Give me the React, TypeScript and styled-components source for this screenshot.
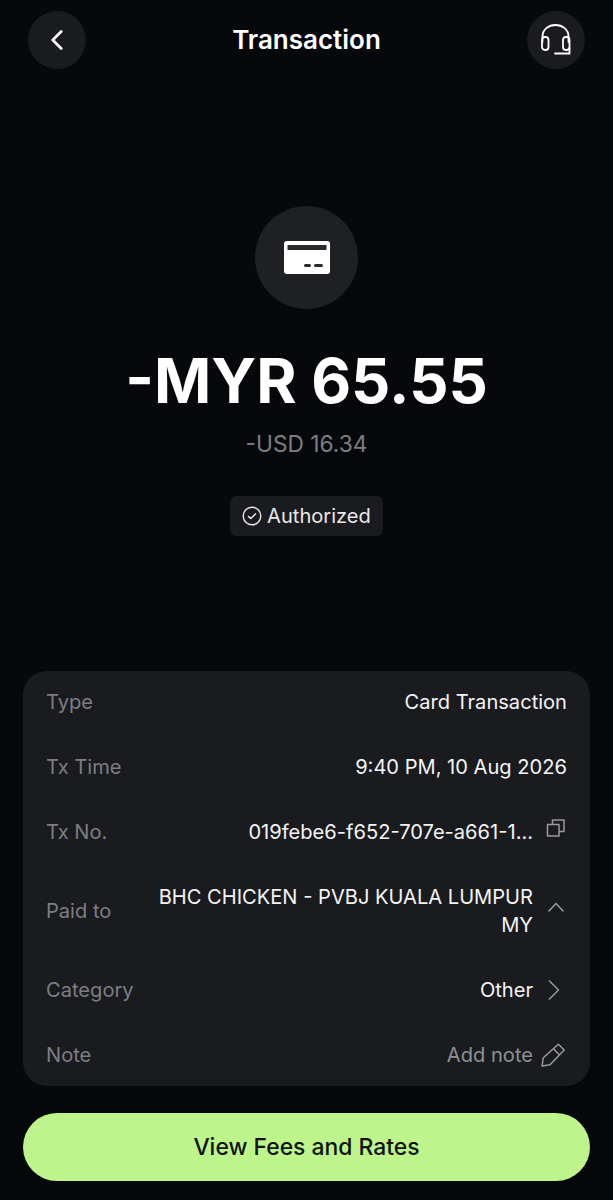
import { ChevronLeft } from 'lucide-react';
import styled, { createGlobalStyle } from 'styled-components';

const GlobalStyle = createGlobalStyle`
  html, body {
    margin: 0;
    padding: 0;
    background-color: #07080c;
  }
  * {
    box-sizing: border-box;
  }
`;

const Page = styled.div`
  width: 613px;
  height: 1200px;
  display: flex;
  flex-direction: column;
  background-color: #07080c;
  color: #ffffff;
  font-family: Inter, 'Liberation Sans', sans-serif;
  overflow: hidden;
`;

const Header = styled.header`
  display: flex;
  justify-content: space-between;
  align-items: center;
  padding: 11px 28px 0;
`;

const RoundButton = styled.div`
  width: 58px;
  height: 58px;
  border-radius: 50%;
  display: flex;
  align-items: center;
  justify-content: center;
  background-color: #1a1b1f;
`;

const Title = styled.h1`
  margin: 0;
  font-size: 26px;
  font-weight: 600;
  line-height: 58px;
`;

const Hero = styled.section`
  display: flex;
  flex-direction: column;
  align-items: center;
  padding-top: 137px;
`;

const HeroCircle = styled.div`
  width: 103px;
  height: 103px;
  border-radius: 50%;
  display: flex;
  align-items: center;
  justify-content: center;
  background-color: #1f2024;
`;

const Amount = styled.div`
  margin-top: 32px;
  font-size: 61.5px;
  font-weight: 700;
  line-height: 80px;
`;

const SubAmount = styled.div`
  margin-top: 9px;
  font-size: 22.7px;
  line-height: 28px;
  color: #7d7e83;
`;

const Badge = styled.div`
  margin-top: 38px;
  height: 40px;
  width: 153px;
  display: flex;
  align-items: center;
  justify-content: center;
  gap: 5px;
  border-radius: 7px;
  background-color: #1a1b1f;
  font-size: 20.1px;
  color: #e8e8ea;
`;

const Card = styled.section`
  margin: 135px 23px 0;
  padding: 17px 23px 17px;
  display: flex;
  flex-direction: column;
  gap: 37px;
  border-radius: 24px;
  background-color: #1a1b1f;
  font-size: 20.1px;
  line-height: 28px;
`;

const Row = styled.div`
  display: flex;
  justify-content: space-between;
  align-items: center;
`;

const Label = styled.span`
  color: #7d7e83;
  flex-shrink: 0;
`;

const Value = styled.div<{ $muted?: boolean }>`
  display: flex;
  align-items: center;
  gap: 8px;
  text-align: right;
  color: ${(p) => (p.$muted ? '#8f9095' : '#f4f4f5')};
`;

const IconBox = styled.svg`
  width: 26px;
  height: 26px;
  flex-shrink: 0;
  fill: none;
  stroke: #9a9b9f;
  stroke-width: 1.5;
  stroke-linejoin: round;
`;

const PaidTo = styled.span`
  width: 390px;
`;

const ActionButton = styled.div`
  margin: 27px 23px 0;
  height: 68px;
  border-radius: 34px;
  display: flex;
  align-items: center;
  justify-content: center;
  background-color: #bdf48b;
  color: #10130c;
  font-size: 22.9px;
  font-weight: 500;
`;

const CopyIcon = () => (
  <IconBox viewBox="0 0 26 26">
    <rect x="6.5" y="5.5" width="11.5" height="11.5" />
    <path d="M11.5 5.5V1H23V12.5H18" />
  </IconBox>
);

const UpIcon = () => (
  <IconBox viewBox="0 0 26 26">
    <path d="M7.5 13.5L15 5.5L22.5 13.5" />
  </IconBox>
);

const RightIcon = () => (
  <IconBox viewBox="0 0 26 26">
    <path d="M8 3.5L17.5 13L8 22.5" />
  </IconBox>
);

const PencilIcon = () => (
  <IconBox viewBox="0 0 26 26">
    <path d="M17.3 2.3L23.2 8L9 22.7L1 24L2.3 15.7Z" />
    <path d="M12.6 7L18.4 12.8" />
  </IconBox>
);

const HeadsetIcon = () => (
  <svg width="32" height="36" viewBox="0 0 32 36" fill="none" stroke="#ffffff" strokeWidth="1.8" strokeLinecap="round">
    <path d="M2.5 20V14.5C2.5 7.5 8.5 3 15.5 3S28.5 7.5 28.5 14.5V20" />
    <rect x="2" y="15" width="6.5" height="13" rx="3" />
    <rect x="23" y="15" width="6.5" height="13" rx="3" />
    <path d="M29.5 26V31.5H15" />
  </svg>
);

const CardIcon = () => (
  <svg width="46" height="33" viewBox="0 0 46 33">
    <rect x="0" y="0" width="46" height="33" rx="3" fill="#ffffff" />
    <rect x="3.5" y="4" width="39" height="5" fill="#2a2a2e" />
    <rect x="20" y="23" width="7" height="3" rx="1.5" fill="#2a2a2e" />
    <rect x="30" y="23" width="9" height="3" rx="1.5" fill="#2a2a2e" />
  </svg>
);

const CheckCircleIcon = () => (
  <svg width="20" height="20" viewBox="0 0 20 20" fill="none" stroke="#e8e8ea" strokeWidth="1.4" strokeLinecap="round" strokeLinejoin="round">
    <circle cx="10" cy="10" r="8.8" />
    <path d="M6.4 10.4L8.9 12.6L13.6 7.8" />
  </svg>
);

const App = () => {
  return (
    <Page>
      <GlobalStyle />
      <Header>
        <RoundButton>
          <ChevronLeft size={34} color="#ffffff" strokeWidth={1.9} />
        </RoundButton>
        <Title>Transaction</Title>
        <RoundButton>
          <HeadsetIcon />
        </RoundButton>
      </Header>

      <Hero>
        <HeroCircle>
          <CardIcon />
        </HeroCircle>
        <Amount>-MYR 65.55</Amount>
        <SubAmount>-USD 16.34</SubAmount>
        <Badge>
          <CheckCircleIcon />
          Authorized
        </Badge>
      </Hero>

      <Card>
        <Row>
          <Label>Type</Label>
          <Value>Card Transaction</Value>
        </Row>
        <Row>
          <Label>Tx Time</Label>
          <Value>9:40 PM, 10 Aug 2026</Value>
        </Row>
        <Row>
          <Label>Tx No.</Label>
          <Value>
            019febe6-f652-707e-a661-1...
            <CopyIcon />
          </Value>
        </Row>
        <Row>
          <Label>Paid to</Label>
          <Value>
            <PaidTo>BHC CHICKEN - PVBJ KUALA LUMPUR MY</PaidTo>
            <UpIcon />
          </Value>
        </Row>
        <Row>
          <Label>Category</Label>
          <Value>
            Other
            <RightIcon />
          </Value>
        </Row>
        <Row>
          <Label>Note</Label>
          <Value $muted>
            Add note
            <PencilIcon />
          </Value>
        </Row>
      </Card>

      <ActionButton>View Fees and Rates</ActionButton>
    </Page>
  );
};

export default App;
